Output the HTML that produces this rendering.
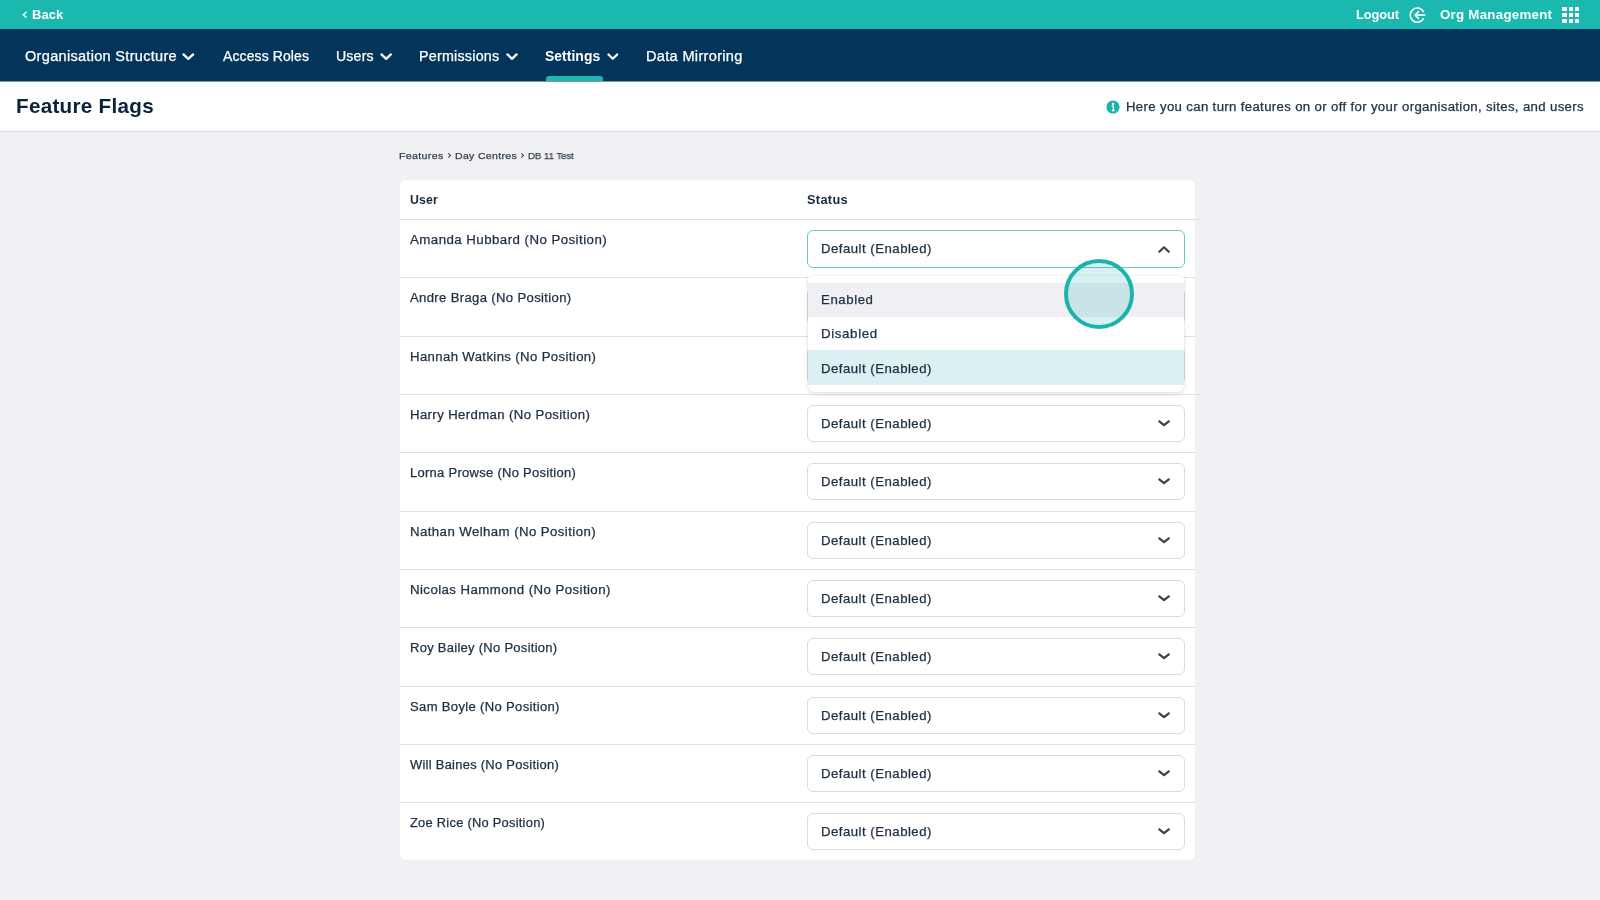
<!DOCTYPE html>
<html><head><meta charset="utf-8">
<style>
*{box-sizing:border-box;margin:0;padding:0}
html,body{width:1600px;height:900px;overflow:hidden;background:#F0F0F5;font-family:"Liberation Sans",sans-serif}
body{position:relative}
.a{position:absolute;white-space:nowrap;will-change:transform}
</style></head><body>
<div style="position:absolute;left:0px;top:0px;width:1600px;height:29px;background:#1BB8B0"></div>
<svg style="position:absolute;left:21.20px;top:9.80px" width="7.40" height="9.40"><path d="M5.15 2.25 L2.25 4.70 L5.15 7.15" fill="none" stroke="#fff" stroke-width="1.5" stroke-linecap="round" stroke-linejoin="round"/></svg>
<div class="a" style="left:31.53px;top:7px;font-size:12.86px;line-height:15px;color:#fff;font-weight:700;letter-spacing:0.073px;transform:scaleX(1.0129);transform-origin:0 0;">Back</div>
<div class="a" style="left:1355.89px;top:7px;font-size:12.86px;line-height:15px;color:#fff;font-weight:700;letter-spacing:-0.085px;transform:scaleX(0.9942);transform-origin:0 0;">Logout</div>
<svg style="position:absolute;left:1408px;top:6px" width="20" height="18" viewBox="0 0 20 18"><path d="M15.45 5.55 A7.1 7.1 0 1 0 15.45 12.65" fill="none" stroke="#fff" stroke-width="1.65" stroke-linecap="round"/><path d="M16.9 9.1 H7.2 M10.4 5.9 L7.1 9.1 L10.4 12.3" fill="none" stroke="#fff" stroke-width="1.65" stroke-linecap="round" stroke-linejoin="round"/></svg>
<div class="a" style="left:1440.40px;top:7px;font-size:12.86px;line-height:15px;color:#fff;font-weight:700;letter-spacing:0.228px;transform:scaleX(1.037);transform-origin:0 0;">Org Management</div>
<div style="position:absolute;left:1562.3px;top:6.8px;width:4.6px;height:4.3px;background:#fff;border-radius:0.6px"></div><div style="position:absolute;left:1568.5px;top:6.8px;width:4.6px;height:4.3px;background:#fff;border-radius:0.6px"></div><div style="position:absolute;left:1574.7px;top:6.8px;width:4.6px;height:4.3px;background:#fff;border-radius:0.6px"></div><div style="position:absolute;left:1562.3px;top:12.9px;width:4.6px;height:4.3px;background:#fff;border-radius:0.6px"></div><div style="position:absolute;left:1568.5px;top:12.9px;width:4.6px;height:4.3px;background:#fff;border-radius:0.6px"></div><div style="position:absolute;left:1574.7px;top:12.9px;width:4.6px;height:4.3px;background:#fff;border-radius:0.6px"></div><div style="position:absolute;left:1562.3px;top:19.0px;width:4.6px;height:4.3px;background:#fff;border-radius:0.6px"></div><div style="position:absolute;left:1568.5px;top:19.0px;width:4.6px;height:4.3px;background:#fff;border-radius:0.6px"></div><div style="position:absolute;left:1574.7px;top:19.0px;width:4.6px;height:4.3px;background:#fff;border-radius:0.6px"></div>
<div style="position:absolute;left:0px;top:29px;width:1600px;height:52px;background:#03355A"></div>
<div class="a" style="left:24.76px;top:49px;font-size:13.81px;line-height:15px;color:#fff;font-weight:400;letter-spacing:0.28px;-webkit-text-stroke:0.25px #fff;transform:scaleX(1.054);transform-origin:0 0;">Organisation Structure</div>
<svg style="position:absolute;left:180.00px;top:50.90px" width="16.60" height="11.30"><path d="M3.45 3.45 L8.30 7.85 L13.15 3.45" fill="none" stroke="#fff" stroke-width="2.3" stroke-linecap="round" stroke-linejoin="round"/></svg>
<div class="a" style="left:222.85px;top:49px;font-size:13.81px;line-height:15px;color:#fff;font-weight:400;letter-spacing:0.089px;-webkit-text-stroke:0.25px #fff;transform:scaleX(1.0161);transform-origin:0 0;">Access Roles</div>
<div class="a" style="left:336.10px;top:49px;font-size:13.81px;line-height:15px;color:#fff;font-weight:400;letter-spacing:0.175px;-webkit-text-stroke:0.25px #fff;transform:scaleX(1.0233);transform-origin:0 0;">Users</div>
<svg style="position:absolute;left:377.90px;top:50.90px" width="16.30" height="11.30"><path d="M3.45 3.45 L8.15 7.85 L12.85 3.45" fill="none" stroke="#fff" stroke-width="2.3" stroke-linecap="round" stroke-linejoin="round"/></svg>
<div class="a" style="left:419.32px;top:49px;font-size:13.81px;line-height:15px;color:#fff;font-weight:400;letter-spacing:0.219px;-webkit-text-stroke:0.25px #fff;transform:scaleX(1.0365);transform-origin:0 0;">Permissions</div>
<svg style="position:absolute;left:503.90px;top:50.90px" width="16.00" height="11.30"><path d="M3.45 3.45 L8.00 7.85 L12.55 3.45" fill="none" stroke="#fff" stroke-width="2.3" stroke-linecap="round" stroke-linejoin="round"/></svg>
<div class="a" style="left:545.36px;top:49px;font-size:13.81px;line-height:15px;color:#fff;font-weight:700;letter-spacing:0.046px;transform:scaleX(1.0081);transform-origin:0 0;">Settings</div>
<svg style="position:absolute;left:604.70px;top:51.10px" width="15.60" height="11.20"><path d="M3.45 3.45 L7.80 7.75 L12.15 3.45" fill="none" stroke="#fff" stroke-width="2.3" stroke-linecap="round" stroke-linejoin="round"/></svg>
<div class="a" style="left:646.29px;top:49px;font-size:13.81px;line-height:15px;color:#fff;font-weight:400;letter-spacing:0.292px;-webkit-text-stroke:0.25px #fff;transform:scaleX(1.0569);transform-origin:0 0;">Data Mirroring</div>
<div style="position:absolute;left:546px;top:76px;width:57px;height:5px;background:#1BB8B0;border-radius:3px 3px 0 0"></div>
<div style="position:absolute;left:0px;top:81px;width:1600px;height:50px;background:#fff"></div>
<div style="position:absolute;left:0px;top:81px;width:1600px;height:1px;background:#7F97AA"></div>
<div style="position:absolute;left:0px;top:131px;width:1600px;height:1px;background:#DCDDE3"></div>
<div class="a" style="left:16.10px;top:95px;font-size:19.99px;line-height:22px;color:#0B2039;font-weight:700;letter-spacing:0.274px;transform:scaleX(1.0333);transform-origin:0 0;">Feature Flags</div>
<svg style="position:absolute;left:1106.3px;top:99.5px" width="14" height="14" viewBox="0 0 14 14"><circle cx="7" cy="7" r="6.6" fill="#1DB3AA"/><circle cx="7" cy="3.9" r="1.05" fill="#fff"/><path d="M5.7 6.1 H7.4 V10.4 M5.9 10.5 H8.6" fill="none" stroke="#fff" stroke-width="1.3"/></svg>
<div class="a" style="left:1125.91px;top:100px;font-size:12.21px;line-height:14px;color:#22344A;font-weight:400;letter-spacing:0.322px;-webkit-text-stroke:0.25px #22344A;transform:scaleX(1.0806);transform-origin:0 0;">Here you can turn features on or off for your organisation, sites, and users</div>
<div class="a" style="left:399.38px;top:150px;font-size:9.88px;line-height:11px;color:#333F4E;font-weight:400;letter-spacing:0.317px;-webkit-text-stroke:0.25px #333F4E;transform:scaleX(1.0751);transform-origin:0 0;">Features</div>
<svg style="position:absolute;left:446.90px;top:152.00px" width="5.20" height="6.70"><path d="M1.65 1.65 L3.55 3.35 L1.65 5.05" fill="none" stroke="#333F4E" stroke-width="1.1" stroke-linecap="round" stroke-linejoin="round"/></svg>
<div class="a" style="left:455.23px;top:150px;font-size:9.88px;line-height:11px;color:#333F4E;font-weight:400;letter-spacing:0.287px;-webkit-text-stroke:0.25px #333F4E;transform:scaleX(1.0692);transform-origin:0 0;">Day Centres</div>
<svg style="position:absolute;left:519.90px;top:152.00px" width="5.20" height="6.70"><path d="M1.65 1.65 L3.55 3.35 L1.65 5.05" fill="none" stroke="#333F4E" stroke-width="1.1" stroke-linecap="round" stroke-linejoin="round"/></svg>
<div class="a" style="left:527.94px;top:150px;font-size:9.88px;line-height:11px;color:#333F4E;font-weight:400;letter-spacing:-0.066px;-webkit-text-stroke:0.25px #333F4E;transform:scaleX(0.9794);transform-origin:0 0;">DB 11 Test</div>
<div style="position:absolute;left:400px;top:180px;width:795px;height:680px;background:#fff;border-radius:6px"></div>
<div class="a" style="left:409.86px;top:193px;font-size:12.06px;line-height:14px;color:#17283C;font-weight:700;letter-spacing:0.138px;transform:scaleX(1.0232);transform-origin:0 0;">User</div>
<div class="a" style="left:807.18px;top:193px;font-size:12.06px;line-height:14px;color:#17283C;font-weight:700;letter-spacing:0.318px;transform:scaleX(1.0577);transform-origin:0 0;">Status</div>
<div style="position:absolute;left:400px;top:219px;width:795px;height:1px;background:#DFE0E5"></div>
<div class="a" style="left:410.25px;top:233px;font-size:12.21px;line-height:14px;color:#1E2F42;font-weight:400;letter-spacing:0.413px;-webkit-text-stroke:0.25px #1E2F42;transform:scaleX(1.0881);transform-origin:0 0;">Amanda Hubbard (No Position)</div>
<div style="position:absolute;left:400px;top:277px;width:795px;height:1px;background:#DFE0E5"></div>
<div class="a" style="left:410.24px;top:291px;font-size:12.21px;line-height:14px;color:#1E2F42;font-weight:400;letter-spacing:0.325px;-webkit-text-stroke:0.25px #1E2F42;transform:scaleX(1.0729);transform-origin:0 0;">Andre Braga (No Position)</div>
<div style="position:absolute;left:807px;top:288px;width:378px;height:37px;border:1px solid #D8DBDF;border-radius:6px;background:#fff;box-sizing:border-box"></div>
<div class="a" style="left:821.39px;top:300px;font-size:11.92px;line-height:14px;color:#1E2F42;font-weight:400;letter-spacing:0.442px;-webkit-text-stroke:0.25px #1E2F42;transform:scaleX(1.107);transform-origin:0 0;">Default (Enabled)</div>
<svg style="position:absolute;left:1156.10px;top:301.40px" width="16.10" height="10.50"><path d="M3.30 3.30 L8.05 7.20 L12.80 3.30" fill="none" stroke="#3E4146" stroke-width="2.2" stroke-linecap="round" stroke-linejoin="round"/></svg>
<div style="position:absolute;left:400px;top:336px;width:795px;height:1px;background:#DFE0E5"></div>
<div class="a" style="left:410.01px;top:350px;font-size:12.21px;line-height:14px;color:#1E2F42;font-weight:400;letter-spacing:0.352px;-webkit-text-stroke:0.25px #1E2F42;transform:scaleX(1.0776);transform-origin:0 0;">Hannah Watkins (No Position)</div>
<div style="position:absolute;left:807px;top:347px;width:378px;height:37px;border:1px solid #D8DBDF;border-radius:6px;background:#fff;box-sizing:border-box"></div>
<div class="a" style="left:821.39px;top:359px;font-size:11.92px;line-height:14px;color:#1E2F42;font-weight:400;letter-spacing:0.442px;-webkit-text-stroke:0.25px #1E2F42;transform:scaleX(1.107);transform-origin:0 0;">Default (Enabled)</div>
<svg style="position:absolute;left:1156.10px;top:360.40px" width="16.10" height="10.50"><path d="M3.30 3.30 L8.05 7.20 L12.80 3.30" fill="none" stroke="#3E4146" stroke-width="2.2" stroke-linecap="round" stroke-linejoin="round"/></svg>
<div style="position:absolute;left:400px;top:394px;width:795px;height:1px;background:#DFE0E5"></div>
<div class="a" style="left:410.01px;top:408px;font-size:12.21px;line-height:14px;color:#1E2F42;font-weight:400;letter-spacing:0.36px;-webkit-text-stroke:0.25px #1E2F42;transform:scaleX(1.0785);transform-origin:0 0;">Harry Herdman (No Position)</div>
<div style="position:absolute;left:807px;top:405px;width:378px;height:37px;border:1px solid #D8DBDF;border-radius:6px;background:#fff;box-sizing:border-box"></div>
<div class="a" style="left:821.39px;top:417px;font-size:11.92px;line-height:14px;color:#1E2F42;font-weight:400;letter-spacing:0.442px;-webkit-text-stroke:0.25px #1E2F42;transform:scaleX(1.107);transform-origin:0 0;">Default (Enabled)</div>
<svg style="position:absolute;left:1156.10px;top:418.40px" width="16.10" height="10.50"><path d="M3.30 3.30 L8.05 7.20 L12.80 3.30" fill="none" stroke="#3E4146" stroke-width="2.2" stroke-linecap="round" stroke-linejoin="round"/></svg>
<div style="position:absolute;left:400px;top:452px;width:795px;height:1px;background:#DFE0E5"></div>
<div class="a" style="left:410.03px;top:466px;font-size:12.21px;line-height:14px;color:#1E2F42;font-weight:400;letter-spacing:0.283px;-webkit-text-stroke:0.25px #1E2F42;transform:scaleX(1.0613);transform-origin:0 0;">Lorna Prowse (No Position)</div>
<div style="position:absolute;left:807px;top:463px;width:378px;height:37px;border:1px solid #D8DBDF;border-radius:6px;background:#fff;box-sizing:border-box"></div>
<div class="a" style="left:821.39px;top:475px;font-size:11.92px;line-height:14px;color:#1E2F42;font-weight:400;letter-spacing:0.442px;-webkit-text-stroke:0.25px #1E2F42;transform:scaleX(1.107);transform-origin:0 0;">Default (Enabled)</div>
<svg style="position:absolute;left:1156.10px;top:476.40px" width="16.10" height="10.50"><path d="M3.30 3.30 L8.05 7.20 L12.80 3.30" fill="none" stroke="#3E4146" stroke-width="2.2" stroke-linecap="round" stroke-linejoin="round"/></svg>
<div style="position:absolute;left:400px;top:511px;width:795px;height:1px;background:#DFE0E5"></div>
<div class="a" style="left:410.00px;top:525px;font-size:12.21px;line-height:14px;color:#1E2F42;font-weight:400;letter-spacing:0.385px;-webkit-text-stroke:0.25px #1E2F42;transform:scaleX(1.0843);transform-origin:0 0;">Nathan Welham (No Position)</div>
<div style="position:absolute;left:807px;top:522px;width:378px;height:37px;border:1px solid #D8DBDF;border-radius:6px;background:#fff;box-sizing:border-box"></div>
<div class="a" style="left:821.39px;top:534px;font-size:11.92px;line-height:14px;color:#1E2F42;font-weight:400;letter-spacing:0.442px;-webkit-text-stroke:0.25px #1E2F42;transform:scaleX(1.107);transform-origin:0 0;">Default (Enabled)</div>
<svg style="position:absolute;left:1156.10px;top:535.40px" width="16.10" height="10.50"><path d="M3.30 3.30 L8.05 7.20 L12.80 3.30" fill="none" stroke="#3E4146" stroke-width="2.2" stroke-linecap="round" stroke-linejoin="round"/></svg>
<div style="position:absolute;left:400px;top:569px;width:795px;height:1px;background:#DFE0E5"></div>
<div class="a" style="left:410.00px;top:583px;font-size:12.21px;line-height:14px;color:#1E2F42;font-weight:400;letter-spacing:0.396px;-webkit-text-stroke:0.25px #1E2F42;transform:scaleX(1.0848);transform-origin:0 0;">Nicolas Hammond (No Position)</div>
<div style="position:absolute;left:807px;top:580px;width:378px;height:37px;border:1px solid #D8DBDF;border-radius:6px;background:#fff;box-sizing:border-box"></div>
<div class="a" style="left:821.39px;top:592px;font-size:11.92px;line-height:14px;color:#1E2F42;font-weight:400;letter-spacing:0.442px;-webkit-text-stroke:0.25px #1E2F42;transform:scaleX(1.107);transform-origin:0 0;">Default (Enabled)</div>
<svg style="position:absolute;left:1156.10px;top:593.40px" width="16.10" height="10.50"><path d="M3.30 3.30 L8.05 7.20 L12.80 3.30" fill="none" stroke="#3E4146" stroke-width="2.2" stroke-linecap="round" stroke-linejoin="round"/></svg>
<div style="position:absolute;left:400px;top:627px;width:795px;height:1px;background:#DFE0E5"></div>
<div class="a" style="left:410.02px;top:641px;font-size:12.21px;line-height:14px;color:#1E2F42;font-weight:400;letter-spacing:0.273px;-webkit-text-stroke:0.25px #1E2F42;transform:scaleX(1.0625);transform-origin:0 0;">Roy Bailey (No Position)</div>
<div style="position:absolute;left:807px;top:638px;width:378px;height:37px;border:1px solid #D8DBDF;border-radius:6px;background:#fff;box-sizing:border-box"></div>
<div class="a" style="left:821.39px;top:650px;font-size:11.92px;line-height:14px;color:#1E2F42;font-weight:400;letter-spacing:0.442px;-webkit-text-stroke:0.25px #1E2F42;transform:scaleX(1.107);transform-origin:0 0;">Default (Enabled)</div>
<svg style="position:absolute;left:1156.10px;top:651.40px" width="16.10" height="10.50"><path d="M3.30 3.30 L8.05 7.20 L12.80 3.30" fill="none" stroke="#3E4146" stroke-width="2.2" stroke-linecap="round" stroke-linejoin="round"/></svg>
<div style="position:absolute;left:400px;top:686px;width:795px;height:1px;background:#DFE0E5"></div>
<div class="a" style="left:410.20px;top:700px;font-size:12.21px;line-height:14px;color:#1E2F42;font-weight:400;letter-spacing:0.313px;-webkit-text-stroke:0.25px #1E2F42;transform:scaleX(1.069);transform-origin:0 0;">Sam Boyle (No Position)</div>
<div style="position:absolute;left:807px;top:697px;width:378px;height:37px;border:1px solid #D8DBDF;border-radius:6px;background:#fff;box-sizing:border-box"></div>
<div class="a" style="left:821.39px;top:709px;font-size:11.92px;line-height:14px;color:#1E2F42;font-weight:400;letter-spacing:0.442px;-webkit-text-stroke:0.25px #1E2F42;transform:scaleX(1.107);transform-origin:0 0;">Default (Enabled)</div>
<svg style="position:absolute;left:1156.10px;top:710.40px" width="16.10" height="10.50"><path d="M3.30 3.30 L8.05 7.20 L12.80 3.30" fill="none" stroke="#3E4146" stroke-width="2.2" stroke-linecap="round" stroke-linejoin="round"/></svg>
<div style="position:absolute;left:400px;top:744px;width:795px;height:1px;background:#DFE0E5"></div>
<div class="a" style="left:410.28px;top:758px;font-size:12.21px;line-height:14px;color:#1E2F42;font-weight:400;letter-spacing:0.25px;-webkit-text-stroke:0.25px #1E2F42;transform:scaleX(1.0601);transform-origin:0 0;">Will Baines (No Position)</div>
<div style="position:absolute;left:807px;top:755px;width:378px;height:37px;border:1px solid #D8DBDF;border-radius:6px;background:#fff;box-sizing:border-box"></div>
<div class="a" style="left:821.39px;top:767px;font-size:11.92px;line-height:14px;color:#1E2F42;font-weight:400;letter-spacing:0.442px;-webkit-text-stroke:0.25px #1E2F42;transform:scaleX(1.107);transform-origin:0 0;">Default (Enabled)</div>
<svg style="position:absolute;left:1156.10px;top:768.40px" width="16.10" height="10.50"><path d="M3.30 3.30 L8.05 7.20 L12.80 3.30" fill="none" stroke="#3E4146" stroke-width="2.2" stroke-linecap="round" stroke-linejoin="round"/></svg>
<div style="position:absolute;left:400px;top:802px;width:795px;height:1px;background:#DFE0E5"></div>
<div class="a" style="left:410.08px;top:816px;font-size:12.21px;line-height:14px;color:#1E2F42;font-weight:400;letter-spacing:0.248px;-webkit-text-stroke:0.25px #1E2F42;transform:scaleX(1.0537);transform-origin:0 0;">Zoe Rice (No Position)</div>
<div style="position:absolute;left:807px;top:813px;width:378px;height:37px;border:1px solid #D8DBDF;border-radius:6px;background:#fff;box-sizing:border-box"></div>
<div class="a" style="left:821.39px;top:825px;font-size:11.92px;line-height:14px;color:#1E2F42;font-weight:400;letter-spacing:0.442px;-webkit-text-stroke:0.25px #1E2F42;transform:scaleX(1.107);transform-origin:0 0;">Default (Enabled)</div>
<svg style="position:absolute;left:1156.10px;top:826.40px" width="16.10" height="10.50"><path d="M3.30 3.30 L8.05 7.20 L12.80 3.30" fill="none" stroke="#3E4146" stroke-width="2.2" stroke-linecap="round" stroke-linejoin="round"/></svg>
<div style="position:absolute;left:1195px;top:219px;width:5px;height:1px;background:#DFE0E5"></div>
<div style="position:absolute;left:1195px;top:394px;width:5px;height:1px;background:#DFE0E5"></div>
<div style="position:absolute;left:807px;top:230px;width:378px;height:38px;border:1px solid #66C9C2;border-radius:6px;background:#fff;box-sizing:border-box"></div>
<div class="a" style="left:820.89px;top:242px;font-size:11.92px;line-height:14px;color:#1E2F42;font-weight:400;letter-spacing:0.442px;-webkit-text-stroke:0.25px #1E2F42;transform:scaleX(1.107);transform-origin:0 0;">Default (Enabled)</div>
<svg style="position:absolute;left:1156.10px;top:243.70px" width="16.10" height="11.00"><path d="M3.30 7.70 L8.05 3.30 L12.80 7.70" fill="none" stroke="#3E4146" stroke-width="2.2" stroke-linecap="round" stroke-linejoin="round"/></svg>
<div style="position:absolute;left:808px;top:276px;width:376px;height:116px;background:#fff;border-radius:3px 3px 6px 6px;box-shadow:0 2px 5px rgba(20,30,50,0.10),0 0 1.5px rgba(20,30,50,0.18)"></div>
<div style="position:absolute;left:808px;top:283px;width:376px;height:34px;background:#EFEFF4"></div>
<div style="position:absolute;left:808px;top:350px;width:376px;height:35px;background:#DAF0F2"></div>
<div class="a" style="left:820.89px;top:293px;font-size:11.92px;line-height:14px;color:#1E2F42;font-weight:400;letter-spacing:0.529px;-webkit-text-stroke:0.25px #1E2F42;transform:scaleX(1.1076);transform-origin:0 0;">Enabled</div>
<div class="a" style="left:820.89px;top:327px;font-size:11.92px;line-height:14px;color:#1E2F42;font-weight:400;letter-spacing:0.556px;-webkit-text-stroke:0.25px #1E2F42;transform:scaleX(1.1179);transform-origin:0 0;">Disabled</div>
<div class="a" style="left:820.89px;top:362px;font-size:11.92px;line-height:14px;color:#1E2F42;font-weight:400;letter-spacing:0.442px;-webkit-text-stroke:0.25px #1E2F42;transform:scaleX(1.107);transform-origin:0 0;">Default (Enabled)</div>
<div style="position:absolute;left:1064px;top:259px;width:70px;height:70px;border-radius:50%;border:4px solid #1EB3AA;background:rgba(30,179,170,0.18);box-sizing:border-box"></div>
</body></html>
